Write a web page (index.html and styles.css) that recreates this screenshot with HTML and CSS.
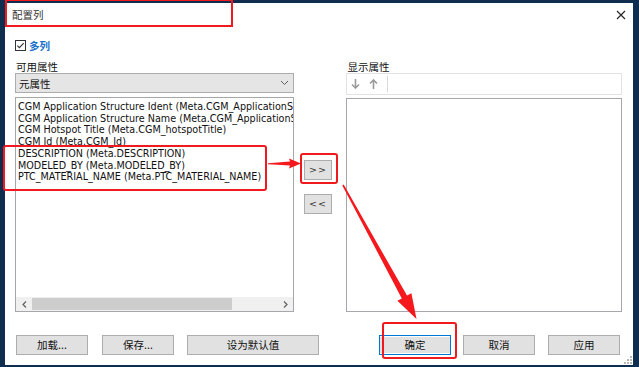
FILE: index.html
```html
<!DOCTYPE html>
<html lang="zh-CN">
<head>
<meta charset="utf-8">
<title>配置列</title>
<link rel="stylesheet" href="styles.css">
</head>
<body>
<div class="dialog">
  <div class="titlebar">
    <span class="title">配置列</span>
    <svg class="close" width="10" height="10" viewBox="0 0 10 10"><path d="M1 1L9 9M9 1L1 9" stroke="#222" stroke-width="1.1" fill="none"/></svg>
  </div>
  <div class="content">
    <label class="checkrow">
      <svg class="checkbox" width="11" height="11" viewBox="0 0 11 11"><rect x="0.5" y="0.5" width="10" height="10" fill="#fff" stroke="#333"/><path d="M2.3 5.6L4.4 7.7L8.7 3.2" stroke="#333" stroke-width="1.1" fill="none"/></svg>
      <span class="checklabel">多列</span>
    </label>
    <div class="columns">
      <div class="col">
        <div class="label">可用属性</div>
        <div class="dropdown">
          <span>元属性</span>
          <svg width="9" height="6" viewBox="0 0 9 6"><path d="M1 1L4.5 4.5L8 1" stroke="#606060" fill="none"/></svg>
        </div>
        <div class="listbox left-list">
          <div class="items">
            <div class="item">CGM Application Structure Ident (Meta.CGM_ApplicationStructureIdent)</div>
            <div class="item">CGM Application Structure Name (Meta.CGM_ApplicationStructureName)</div>
            <div class="item">CGM Hotspot Title (Meta.CGM_hotspotTitle)</div>
            <div class="item">CGM Id (Meta.CGM_Id)</div>
            <div class="item">DESCRIPTION (Meta.DESCRIPTION)</div>
            <div class="item">MODELED_BY (Meta.MODELED_BY)</div>
            <div class="item">PTC_MATERIAL_NAME (Meta.PTC_MATERIAL_NAME)</div>
          </div>
          <div class="hscroll">
            <div class="sbtn"><svg width="5" height="7" viewBox="0 0 5 7"><path d="M4 0.5L1 3.5L4 6.5" stroke="#606060" stroke-width="1.2" fill="none"/></svg></div>
            <div class="track"><div class="thumb"></div></div>
            <div class="sbtn"><svg width="5" height="7" viewBox="0 0 5 7"><path d="M1 0.5L4 3.5L1 6.5" stroke="#606060" stroke-width="1.2" fill="none"/></svg></div>
          </div>
        </div>
      </div>
      <div class="mid">
        <button class="btn small">&gt;&gt;</button>
        <button class="btn small">&lt;&lt;</button>
      </div>
      <div class="col">
        <div class="label">显示属性</div>
        <div class="toolbar">
          <svg class="tool" width="9" height="10" viewBox="0 0 9 10"><path d="M4.5 0V9M1 5.5L4.5 9L8 5.5" stroke="#9a9a9a" stroke-width="1.6" fill="none"/></svg>
          <svg class="tool" width="9" height="10" viewBox="0 0 9 10"><path d="M4.5 10V1M1 4.5L4.5 1L8 4.5" stroke="#9a9a9a" stroke-width="1.6" fill="none"/></svg>
          <span class="sep"></span>
        </div>
        <div class="listbox right-list"></div>
      </div>
    </div>
    <div class="buttons">
      <div class="group">
        <button class="btn">加载...</button>
        <button class="btn">保存...</button>
        <button class="btn wide">设为默认值</button>
      </div>
      <div class="group right">
        <button class="btn default">确定</button>
        <button class="btn">取消</button>
        <button class="btn">应用</button>
      </div>
    </div>
  </div>
  <svg class="grip" width="8" height="8" viewBox="0 0 8 8"><g fill="#b8b8b8"><rect x="6" y="0" width="2" height="2"/><rect x="3" y="3" width="2" height="2"/><rect x="6" y="3" width="2" height="2"/><rect x="0" y="6" width="2" height="2"/><rect x="3" y="6" width="2" height="2"/><rect x="6" y="6" width="2" height="2"/></g></svg>
</div>

<div class="mark mark-title"></div>
<div class="mark mark-items"></div>
<div class="mark mark-add"></div>
<div class="mark mark-ok"></div>
<svg class="arrows" width="639" height="367" viewBox="0 0 639 367">
  <polygon fill="#f5181c" points="268,163.2 290,161.6 289,158.5 301,163.5 289,168.5 290,165.4 268,164.2"/>
  <polygon fill="#f5181c" points="343.7,184.6 407.0,295.6 411.4,293.2 416.5,319 397.4,300.8 401.8,298.4 342.3,185.4"/>
</svg>
</body>
</html>
```

FILE: styles.css
```css
html, body {
  margin: 0;
  padding: 0;
}
body {
  width: 639px;
  height: 367px;
  background: #0e2d4f;
  position: relative;
  overflow: hidden;
  font-family: "Noto Sans CJK SC", "Liberation Sans", sans-serif;
  font-size: 10.5px;
  color: #111;
}
.dialog {
  position: absolute;
  left: 5px;
  top: 3px;
  width: 628px;
  height: 362px;
  background: #fff;
  display: flex;
  flex-direction: column;
}
.titlebar {
  height: 25px;
  display: flex;
  align-items: center;
  justify-content: space-between;
  padding: 0 7px 0 7px;
  flex: none;
}
.title {
  color: #333;
  font-size: 10.5px;
  line-height: 12px;
  margin-top: -1px;
}
.close {
  margin-top: -2px;
}
.content {
  padding: 0 11px 0 10px;
  display: flex;
  flex-direction: column;
}
.checkrow {
  margin-top: 12px;
  height: 11px;
  display: flex;
  align-items: center;
  gap: 3px;
}
.checkbox {
  flex: none;
}
.checklabel {
  color: #1a6fcc;
  font-weight: bold;
  font-size: 10.5px;
  line-height: 11px;
}
.columns {
  margin-top: 9px;
  display: flex;
  height: 252px;
}
.col {
  width: 279px;
  display: flex;
  flex-direction: column;
}
.label {
  height: 13px;
  line-height: 13px;
  font-size: 10.5px;
  padding-left: 1px;
}
.dropdown {
  height: 20px;
  box-sizing: border-box;
  background: #e5e5e5;
  border: 1px solid #acacac;
  display: flex;
  align-items: center;
  justify-content: space-between;
  padding: 0 4px 0 3px;
  font-size: 10.5px;
}
.listbox {
  border: 1px solid #a5a7ab;
  box-sizing: border-box;
  background: #fff;
}
.left-list {
  margin-top: 4px;
  height: 215px;
  display: flex;
  flex-direction: column;
}
.items {
  flex: 1;
  overflow: hidden;
  padding: 3px 0 0 2px;
  font-family: "DejaVu Sans", Verdana, sans-serif;
  font-size: 9.6px;
  line-height: 11.7px;
  color: #111;
}
.item {
  white-space: nowrap;
}
.hscroll {
  height: 14px;
  display: flex;
  background: #f0f0f0;
  flex: none;
}
.sbtn {
  width: 16px;
  display: flex;
  align-items: center;
  justify-content: center;
}
.track {
  flex: 1;
  display: flex;
  align-items: stretch;
  padding: 1px 0;
}
.thumb {
  width: 200px;
  background: #cdcdcd;
}
.mid {
  width: 53px;
  display: flex;
  flex-direction: column;
  padding-left: 10px;
  box-sizing: border-box;
  padding-top: 100px;
  gap: 14px;
}
.toolbar {
  height: 22px;
  box-sizing: border-box;
  border: 1px solid #e3e3e3;
  display: flex;
  align-items: center;
  padding-left: 4px;
  gap: 9px;
}
.tool {
  flex: none;
}
.sep {
  width: 1px;
  height: 16px;
  background: #dadada;
}
.right-list {
  margin-top: 3px;
  height: 214px;
}
.btn {
  font-family: "Noto Sans CJK SC", "Liberation Sans", sans-serif;
  font-size: 10.5px;
  color: #111;
  background: #e1e1e1;
  border: 1px solid #adadad;
  height: 20px;
  width: 72px;
  padding: 0;
  margin: 0;
  line-height: 16px;
  box-sizing: border-box;
}
.btn.small {
  width: 28px;
  height: 20px;
  font-family: "DejaVu Sans", sans-serif;
  font-size: 9.5px;
  letter-spacing: 1px;
  color: #333;
}
.btn.wide {
  width: 132px;
}
.btn.default {
  border: 1px solid #0078d7;
  box-shadow: inset 0 1px 0 #fff, inset 0 -1px 0 #fff;
}
.buttons {
  margin-top: 23px;
  display: flex;
  justify-content: space-between;
  padding-left: 1px;
  padding-right: 2px;
}
.group {
  display: flex;
  gap: 14px;
}
.group .btn.wide {
  margin-left: -1px;
}
.group.right {
  gap: 12px;
}
.group.right .btn:last-child {
  margin-left: 1px;
}
.grip {
  position: absolute;
  right: 1px;
  bottom: 1px;
}
.mark {
  position: absolute;
  border: 2.5px solid #f01a1e;
  border-radius: 3px;
  box-sizing: border-box;
}
.mark-title {
  left: 5px;
  top: -1px;
  width: 228px;
  height: 28px;
  border-width: 2px;
  border-radius: 0;
}
.mark-items {
  left: 3px;
  top: 145px;
  width: 264px;
  height: 46px;
}
.mark-add {
  left: 300px;
  top: 153px;
  width: 38px;
  height: 31px;
}
.mark-ok {
  left: 382px;
  top: 322px;
  width: 75px;
  height: 37px;
}
.arrows {
  position: absolute;
  left: 0;
  top: 0;
  pointer-events: none;
}
```
